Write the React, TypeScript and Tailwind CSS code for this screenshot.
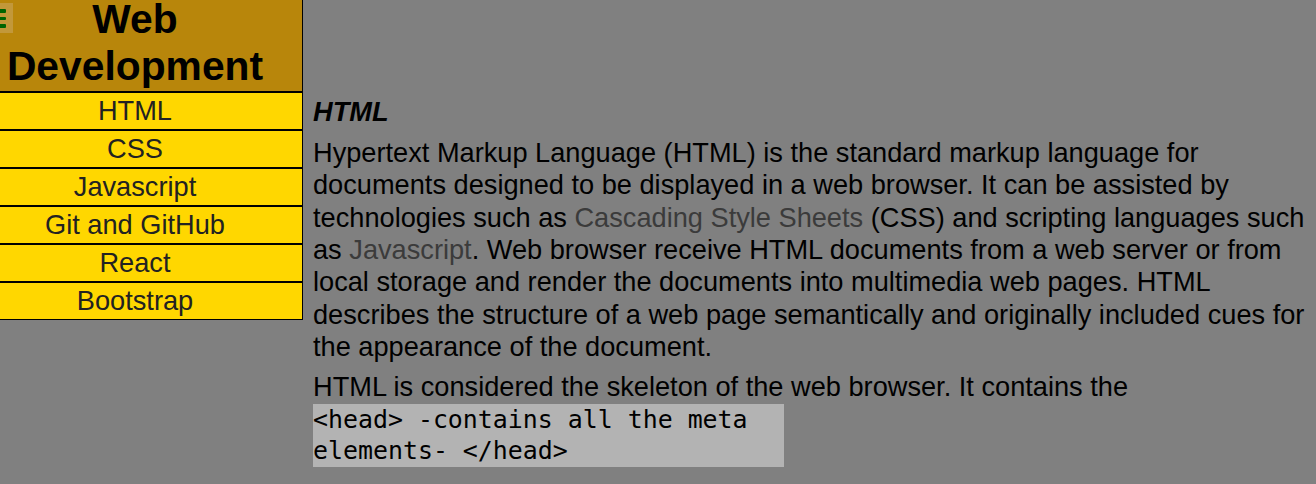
import React from "react";

const navItems = ["HTML", "CSS", "Javascript", "Git and GitHub", "React", "Bootstrap"];

export default function App() {
  return (
    <div
      className="relative flex h-[484px] w-full overflow-hidden bg-[#808080] text-black"
      style={{ fontFamily: '"Liberation Sans", Arial, sans-serif' }}
    >
      <aside className="relative flex w-[303px] shrink-0 flex-col self-start">
        <header className="relative flex h-[92px] flex-col border-b border-r border-black bg-[#B8860B] pr-[32px]">
          <div className="absolute left-0 top-[3px] flex h-[30px] w-[13px] flex-col gap-[4px] bg-[#c2983a] pt-[6px]">
            <div className="h-[3.5px] w-[6px] rounded-r-[1px] bg-[#006400]" />
            <div className="h-[3.5px] w-[6px] rounded-r-[1px] bg-[#006400]" />
            <div className="h-[3.5px] w-[6px] rounded-r-[1px] bg-[#006400]" />
          </div>
          <h1 className="mt-[-4px] text-center text-[40.8px] font-bold leading-[46.7px] text-black">
            Web
            <br />
            Development
          </h1>
        </header>
        <nav className="flex flex-col">
          {navItems.map((item) => (
            <div
              key={item}
              className="h-[38px] border-y border-r border-black bg-[#FFD700] pr-[32px] text-center text-[27.2px] leading-[36px] text-[#222]"
            >
              {item}
            </div>
          ))}
        </nav>
      </aside>
      <main className="flex min-w-0 flex-1 flex-col pl-[10px] pt-[95.5px]">
        <h3 className="mb-[9.4px] text-[27.2px] font-bold italic leading-[32.3px]">HTML</h3>
        <p className="mb-[8px] text-[27.2px] leading-[32.3px]">
          Hypertext Markup Language (HTML) is the standard markup language for documents designed
          to be displayed in a web browser. It can be assisted by technologies such as{" "}
          <span className="text-[#3b3b3b]">Cascading Style Sheets</span> (CSS) and scripting
          languages such as <span className="text-[#3b3b3b]">Javascript</span>. Web browser receive
          HTML documents from a web server or from local storage and render the documents into
          multimedia web pages. HTML describes the structure of a web page semantically and
          originally included cues for the appearance of the document.
        </p>
        <p className="text-[27.2px] leading-[32.3px]">
          HTML is considered the skeleton of the web browser. It contains the
        </p>
        <div
          className="w-[471px] bg-[#b3b3b3] text-[24.9px] leading-[31.5px] text-black"
          style={{ fontFamily: '"DejaVu Sans Mono", "Liberation Mono", monospace' }}
        >
          &lt;head&gt; -contains all the meta elements- &lt;/head&gt;
        </div>
      </main>
    </div>
  );
}
